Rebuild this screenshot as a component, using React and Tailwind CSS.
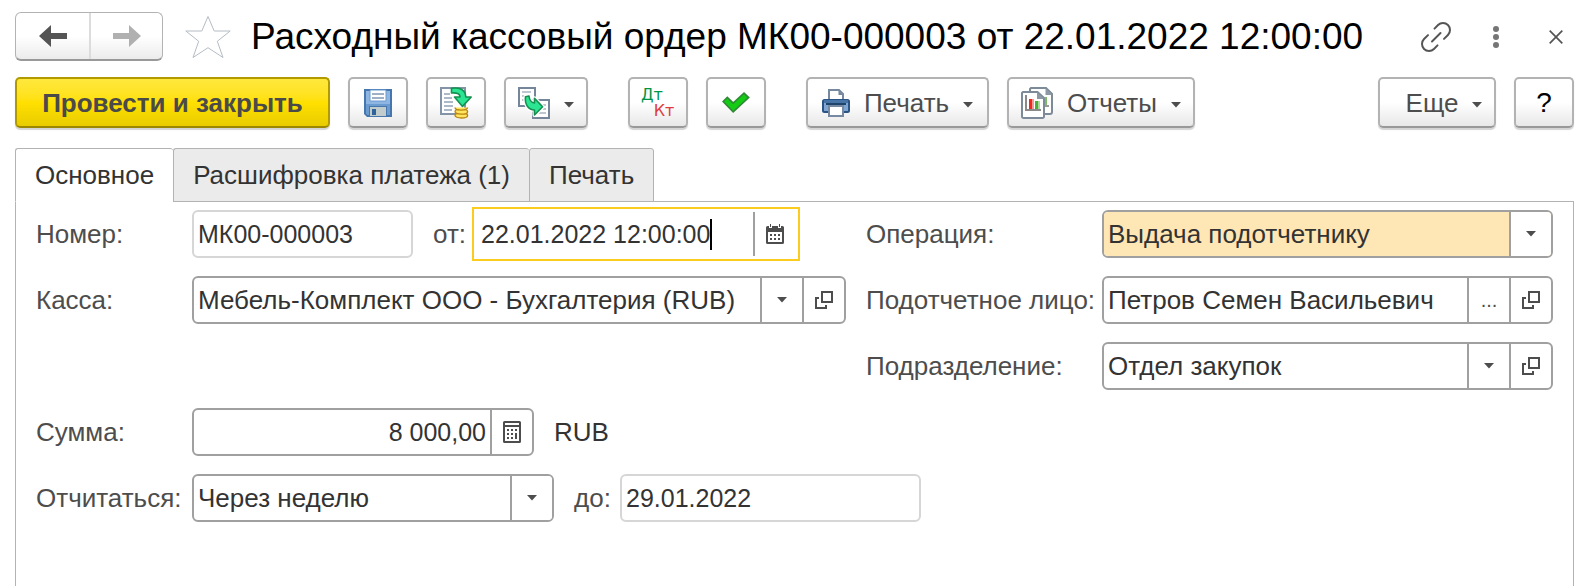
import React from "react";

function Caret({ className = "" }) {
  return (
    <svg width="10" height="6" viewBox="0 0 10 6" fill="#4d4d4d" aria-hidden="true" className={`shrink-0 ${className}`}>
      <path d="M0 0h10L5 5.500z" />
    </svg>
  );
}

function ArrowIcon({ flip, color }) {
  return (
    <svg width="28" height="22" viewBox="0 0 28 22" aria-hidden="true">
      <path d={flip ? "M28 11 16 0v8H0v6h16v8z" : "M0 11 12 0v8h16v6H12v8z"} fill={color} />
    </svg>
  );
}

function StarIcon() {
  return (
    <svg width="46" height="44" viewBox="0 0 46 44" fill="none" stroke="#b4bcc4" aria-hidden="true">
      <path d="M23 1.5 29.2 16h16L32.3 26.3 38 42.5 23 32.7 8 42.5l5.7-16.2L.8 16h16z" />
    </svg>
  );
}

function LinkIcon() {
  return (
    <svg width="30" height="30" viewBox="0 0 30 30" fill="none" stroke="#555" strokeWidth="2" strokeLinecap="round" aria-hidden="true">
      <path d="M13.5 6.6 17.05 3.05A7 7 0 0 1 26.95 12.95L23 16.9" />
      <path d="M16.5 23.4 12.95 26.95A7 7 0 0 1 3.05 17.05L7 13.1" />
      <path d="M11 19.5 19.5 11" />
    </svg>
  );
}

function MoreIcon() {
  return (
    <svg width="6" height="22" viewBox="0 0 6 22" fill="#757575" aria-hidden="true">
      <circle cx="3" cy="3" r="3" />
      <circle cx="3" cy="11" r="3" />
      <circle cx="3" cy="19" r="3" />
    </svg>
  );
}

function CloseIcon() {
  return (
    <svg width="14" height="14" viewBox="0 0 14 14" fill="none" stroke="#555" strokeWidth="1.7" aria-hidden="true">
      <path d="M.7.7l12.6 12.6M13.3.7.7 13.3" />
    </svg>
  );
}

function SaveIcon() {
  return (
    <svg width="28" height="28" viewBox="0 0 28 28" aria-hidden="true">
      <path d="M0 0h28v28H3l-3-3z" fill="#4577ae" />
      <path d="M2 2h24v24H4l-2-2z" fill="#8fb5e3" />
      <path d="M2 15h24v11H4l-2-2z" fill="#6c9bd0" />
      <path d="M6 1h16v11H6z" fill="#fff" stroke="#6a9bd0" strokeWidth="1" />
      <path d="M8 5h12M8 9h12" stroke="#9db0c6" strokeWidth="2" />
      <path d="M5 17h18v11H5z" fill="#4577ae" />
      <path d="M6 18h16v9H6z" fill="#c3cccd" />
      <path d="M8 20h4v6H8z" fill="#2f6299" />
    </svg>
  );
}

function RegisterIcon() {
  return (
    <svg width="32" height="32" viewBox="0 0 32 32" aria-hidden="true">
      <path d="M1 1h24v26H1z" fill="#fff" stroke="#8494a8" strokeWidth="2" />
      <path d="M4 7h6M4 11h8M4 15h9M4 19h9M4 23h8" stroke="#94a3b5" strokeWidth="1.6" />
      <path
        d="M11.5 1.2C19 .2 25.5 2 25.8 10h5.4l-8.7 9.4L14.500 10H20C20 6.500 16.500 5.500 11.500 6z"
        fill="#2be593"
        stroke="#15904f"
        strokeWidth="1.6"
        strokeLinejoin="round"
      />
      <g fill="#ffe45e" stroke="#b98512" strokeWidth="1.3">
        <ellipse cx="21.300" cy="28.500" rx="6.300" ry="2.500" />
        <ellipse cx="21.300" cy="24.700" rx="6.300" ry="2.500" />
        <path d="M15 20.500c0 3.500 12.600 3.500 12.600 0" />
      </g>
    </svg>
  );
}

function CreateBasedIcon() {
  const arrow =
    "M7.500 9.700 11 9c.5 4.500 2 6.500 5.500 7v-4.800L24.600 19.800 16.500 28v-5C10.500 23 6.500 17.500 7.500 9.700z";
  return (
    <svg width="32" height="32" viewBox="0 0 32 32" aria-hidden="true">
      <g fill="#fff" stroke="#76869a" strokeWidth="2">
        <path d="M1 1h16v18H1z" />
        <path d="M15 13h16v18H15z" />
      </g>
      <path d="M4 5h9M4 9h3M4 13h3M24 18h4M25 22h3M20 26h8" stroke="#a9b4c1" strokeWidth="1.6" />
      <path d={arrow} fill="#fff" stroke="#fff" strokeWidth="4" strokeLinejoin="round" />
      <path d={arrow} fill="#2be593" stroke="#15904f" strokeWidth="1.6" strokeLinejoin="round" />
    </svg>
  );
}

function CheckIcon() {
  return (
    <svg width="28" height="22" viewBox="0 0 28 22" aria-hidden="true">
      <path d="M1.200 9.500 5.300 5.400 11.200 11.200 22 1.200 26.600 5.600 11.200 19.800z" fill="#14cc14" stroke="#2f8a35" strokeWidth="1.700" />
    </svg>
  );
}

function PrinterIcon() {
  return (
    <svg width="28" height="28" viewBox="0 0 28 28" aria-hidden="true">
      <path d="M7 12V1h10l4 4v7z" fill="#fff" stroke="#7789a0" strokeWidth="2" />
      <path d="M16.500 1v5H21z" fill="#7789a0" />
      <rect x="1" y="11" width="26" height="12" rx="1.500" fill="#7fa6d2" stroke="#2a5483" strokeWidth="2" />
      <path d="M2 11h24v3H2z" fill="#4674a6" />
      <path d="M4 15h20" stroke="#1f446c" strokeWidth="2" />
      <path d="M7 17h14v10H7z" fill="#fff" stroke="#7789a0" strokeWidth="2" />
    </svg>
  );
}

function ReportsIcon() {
  return (
    <svg width="32" height="32" viewBox="0 0 32 32" aria-hidden="true">
      <path d="M10 1h15l6 6v18a2 2 0 0 1-2 2H11a2 2 0 0 1-2-2V2z" fill="#fff" stroke="#7d8b98" strokeWidth="2" />
      <path d="M24.500 1v7H31z" fill="#8d9aa6" />
      <path d="M24 10h2v9h-2z" fill="#7dbb6b" />
      <path d="M24 19h4" stroke="#999" strokeWidth="2" />
      <path d="M2 5h14.500L23 11v18.500a1.500 1.500 0 0 1-1.500 1.500h-19A1.500 1.500 0 0 1 1 29.500V6z" fill="#fff" stroke="#7d8b98" strokeWidth="2" />
      <path d="M16 5v7h7z" fill="#8d9aa6" />
      <path d="M5 8v15h15" fill="none" stroke="#8a8a8a" strokeWidth="2" />
      <path d="M8 12h3v10H8z" fill="#f0281e" />
      <path d="M11 12h2v10h-2z" fill="#f59a94" />
      <path d="M14 14h3v8h-3z" fill="#4fae35" />
      <path d="M17 14h2v8h-2z" fill="#a8dc9c" />
    </svg>
  );
}

function CalendarIcon() {
  return (
    <svg width="18" height="20" viewBox="0 0 18 20" aria-hidden="true">
      <path d="M1.500 2H3v2h3V2h6v2h3V2h1.500A1.500 1.500 0 0 1 18 3.500v15a1.500 1.500 0 0 1-1.500 1.500h-15A1.500 1.500 0 0 1 0 18.500v-15A1.500 1.500 0 0 1 1.500 2z" fill="#4d4d4d" />
      <path d="M4 0h1v3H4zM13 0h1v3h-1z" fill="#4d4d4d" />
      <path d="M2 8h14v10H2z" fill="#fff" />
      <path d="M4 10h2v2H4zM8 10h2v2H8zM12 10h2v2h-2zM4 14h2v2H4zM8 14h2v2H8zM12 14h2v2h-2z" fill="#4d4d4d" />
    </svg>
  );
}

function CalculatorIcon() {
  return (
    <svg width="18" height="22" viewBox="0 0 18 22" aria-hidden="true">
      <rect x="1" y="1" width="16" height="20" rx="0.500" fill="#fff" stroke="#4d4d4d" strokeWidth="2" />
      <path d="M2 5h14" stroke="#4d4d4d" strokeWidth="2" />
      <path d="M4 8h2v2H4zM8 8h2v2H8zM12 8h2v2h-2zM4 12h2v2H4zM8 12h2v2H8zM12 12h2v6h-2zM4 16h2v2H4zM8 16h2v2H8z" fill="#4d4d4d" />
    </svg>
  );
}

function OpenIcon() {
  return (
    <svg width="18" height="18" viewBox="0 0 18 18" fill="none" stroke="#4d4d4d" strokeWidth="2" aria-hidden="true">
      <path d="M7 1h10v10H7z" />
      <path d="M4 7H1v10h10v-3" />
    </svg>
  );
}

function ToolButton({ label, className, children }) {
  return (
    <button
      type="button"
      aria-label={label}
      className={`flex h-[51px] shrink-0 items-center justify-center rounded-[5px] border-2 border-[#b3b3b3] border-b-[#999] bg-linear-to-b from-white from-50% to-[#e8e8e8] text-[#4d4d4d] shadow-[0_2px_1px_#d4d4d4] ${className}`}
    >
      {children}
    </button>
  );
}

function Label({ htmlFor, className = "", children }) {
  return (
    <label htmlFor={htmlFor} className={`shrink-0 whitespace-nowrap text-[#4d4d4d] ${className}`}>
      {children}
    </label>
  );
}

function Field({ className = "", readOnly, children }) {
  return (
    <div
      className={`flex h-12 min-w-0 overflow-hidden rounded-[6px] border-2 bg-white ${
        readOnly ? "border-[#d6d6d6]" : "border-[#a0a0a0]"
      } ${className}`}
    >
      {children}
    </div>
  );
}

function TextInput({ id, value, className = "", readOnly }) {
  return (
    <input
      id={id}
      type="text"
      defaultValue={value}
      readOnly={readOnly}
      className={`h-full w-full min-w-0 flex-1 bg-transparent px-1 outline-none ${className}`}
    />
  );
}

function SelectInput({ id, options, className = "" }) {
  return (
    <div className="grid min-w-0 flex-1 grid-cols-1 grid-rows-1">
      <select
        id={id}
        className={`col-start-1 row-start-1 h-full w-full appearance-none truncate pr-11 pl-1 outline-none ${className}`}
      >
        {options.map((option) => (
          <option key={option}>{option}</option>
        ))}
      </select>
      <span className="pointer-events-none col-start-1 row-start-1 flex w-[42px] items-center justify-center justify-self-end border-l-2 border-[#a0a0a0] bg-white">
        <Caret />
      </span>
    </div>
  );
}

function FieldButton({ label, children }) {
  return (
    <button
      type="button"
      aria-label={label}
      className="flex w-[42px] shrink-0 items-center justify-center border-l-2 border-[#a0a0a0] text-[#4d4d4d]"
    >
      {children}
    </button>
  );
}

function Header() {
  return (
    <header className="flex items-center">
      <div className="flex h-[49px] shrink-0 overflow-hidden rounded-[6px] border border-b-2 border-[#b3b3b3] border-b-[#999] bg-linear-to-b from-white from-50% to-[#ececec]">
        <button type="button" aria-label="Назад" className="flex w-[73px] items-center justify-center">
          <ArrowIcon color="#555" />
        </button>
        <button type="button" aria-label="Вперед" className="flex w-[73px] items-center justify-center border-l-2 border-[#dcdcdc]">
          <ArrowIcon flip color="#b0b0b0" />
        </button>
      </div>
      <button type="button" aria-label="В избранное" className="ml-[22px] shrink-0">
        <StarIcon />
      </button>
      <h1 className="ml-5 min-w-0 flex-1 truncate text-[37px] leading-[49px] text-black">
        Расходный кассовый ордер МК00-000003 от 22.01.2022 12:00:00
      </h1>
      <div className="flex shrink-0 items-center gap-6 pl-6">
        <button type="button" aria-label="Получить ссылку" className="flex size-9 items-center justify-center">
          <LinkIcon />
        </button>
        <button type="button" aria-label="Меню" className="flex size-9 items-center justify-center">
          <MoreIcon />
        </button>
        <button type="button" aria-label="Закрыть" className="flex size-9 items-center justify-center">
          <CloseIcon />
        </button>
      </div>
    </header>
  );
}

function Toolbar() {
  return (
    <div className="mt-4 flex gap-[18px]">
      <button
        type="button"
        className="h-[51px] w-[315px] shrink-0 rounded-[5px] border-2 border-[#b09a00] border-b-[#9c8800] bg-linear-to-b from-[#ffe83c] via-[#ffe000] to-[#e8cc00] font-bold text-[#4a4a4a] shadow-[0_2px_1px_#d4d4d4]"
      >
        Провести и закрыть
      </button>
      <ToolButton label="Записать" className="w-[60px]">
        <SaveIcon />
      </ToolButton>
      <ToolButton label="Провести" className="w-[60px]">
        <RegisterIcon />
      </ToolButton>
      <ToolButton label="Создать на основании" className="w-[84px] gap-[14px]">
        <CreateBasedIcon />
        <Caret className="mt-1" />
      </ToolButton>
      <ToolButton label="Дт Кт" className="ml-[22px] w-[60px]">
        <span className="flex flex-col font-['DejaVu_Sans',sans-serif] text-[16px] leading-4">
          <span className="pr-3 text-[#009646]">Дт</span>
          <span className="pl-3 text-[#e03c3c]">Кт</span>
        </span>
      </ToolButton>
      <ToolButton label="Проверено" className="w-[60px]">
        <CheckIcon />
      </ToolButton>
      <ToolButton label="Печать" className="ml-[22px] w-[183px] gap-[14px]">
        <PrinterIcon />
        <span>Печать</span>
        <Caret className="mt-1" />
      </ToolButton>
      <ToolButton label="Отчеты" className="w-[188px] gap-[14px]">
        <ReportsIcon />
        <span>Отчеты</span>
        <Caret className="mt-1" />
      </ToolButton>
      <ToolButton label="Еще" className="ml-auto w-[118px] gap-[14px] pl-[14px]">
        <span>Еще</span>
        <Caret className="mt-1" />
      </ToolButton>
      <ToolButton label="Справка" className="w-[60px]">
        <span className="text-[28px] text-black">?</span>
      </ToolButton>
    </div>
  );
}

function Tab({ active, last, children }) {
  return (
    <button
      type="button"
      role="tab"
      aria-selected={Boolean(active)}
      className={`h-[54px] rounded-t-[3px] border-t border-b border-l border-[#b3b3b3] px-[19px] whitespace-nowrap ${
        active ? "border-b-white bg-white" : "bg-[#ebebeb]"
      } ${last ? "border-r" : ""}`}
    >
      {children}
    </button>
  );
}

function PaymentForm() {
  return (
    <form
      className="grid grid-cols-[810fr_687fr] items-start gap-x-5 gap-y-[18px]"
      onSubmit={(event) => event.preventDefault()}
    >
      <div className="flex min-w-0 flex-col gap-[18px]">
        <div className="flex h-12 items-center">
          <Label htmlFor="number" className="w-[156px]">Номер:</Label>
          <Field readOnly className="w-[221px]">
            <TextInput id="number" value="МК00-000003" readOnly className="text-[25px]" />
          </Field>
          <Label htmlFor="date" className="w-[59px] pl-5">от:</Label>
          <div className="flex h-[54px] w-[328px] items-center border-2 border-[#fbcb1e] bg-white">
            <div className="flex min-w-0 flex-1 items-center pl-[7px]">
              <input
                id="date"
                type="text"
                defaultValue="22.01.2022 12:00:00"
                className="field-sizing-content min-w-0 bg-transparent text-[25px] caret-transparent outline-none"
              />
              <span className="h-[31px] w-[2px] shrink-0 bg-black" />
            </div>
            <button
              type="button"
              aria-label="Выбрать дату"
              className="flex h-11 w-[45px] shrink-0 items-center justify-center border-l-2 border-[#a0a0a0] pr-[3px]"
            >
              <CalendarIcon />
            </button>
          </div>
        </div>

        <div className="flex h-12 items-center">
          <Label htmlFor="cashbox" className="w-[156px]">Касса:</Label>
          <Field className="flex-1">
            <SelectInput id="cashbox" options={["Мебель-Комплект ООО - Бухгалтерия (RUB)"]} />
            <FieldButton label="Открыть кассу">
              <OpenIcon />
            </FieldButton>
          </Field>
        </div>
      </div>

      <div className="flex min-w-0 flex-col gap-[18px]">
        <div className="flex h-12 items-center">
          <Label htmlFor="operation" className="w-[236px]">Операция:</Label>
          <Field className="flex-1">
            <SelectInput id="operation" options={["Выдача подотчетнику"]} className="bg-[#ffe7b5]" />
          </Field>
        </div>
        <div className="flex h-12 items-center">
          <Label htmlFor="person" className="w-[236px]">Подотчетное лицо:</Label>
          <Field className="flex-1">
            <TextInput id="person" value="Петров Семен Васильевич" />
            <FieldButton label="Выбрать лицо">
              <span className="text-[20px]">...</span>
            </FieldButton>
            <FieldButton label="Открыть лицо">
              <OpenIcon />
            </FieldButton>
          </Field>
        </div>
        <div className="flex h-12 items-center">
          <Label htmlFor="department" className="w-[236px]">Подразделение:</Label>
          <Field className="flex-1">
            <SelectInput id="department" options={["Отдел закупок"]} />
            <FieldButton label="Открыть подразделение">
              <OpenIcon />
            </FieldButton>
          </Field>
        </div>
      </div>

      <div className="col-span-2 flex flex-col gap-[18px]">
        <div className="flex h-12 items-center">
          <Label htmlFor="amount" className="w-[156px]">Сумма:</Label>
          <Field className="w-[342px]">
            <TextInput id="amount" value="8 000,00" className="text-right text-[25px]" />
            <FieldButton label="Калькулятор">
              <CalculatorIcon />
            </FieldButton>
          </Field>
          <span className="pl-5">RUB</span>
        </div>
        <div className="flex h-12 items-center">
          <Label htmlFor="report" className="w-[156px]">Отчитаться:</Label>
          <Field className="w-[362px]">
            <SelectInput id="report" options={["Через неделю"]} />
          </Field>
          <Label htmlFor="deadline" className="w-[66px] pl-5">до:</Label>
          <Field readOnly className="w-[301px]">
            <TextInput id="deadline" value="29.01.2022" readOnly className="text-[25px]" />
          </Field>
        </div>
      </div>
    </form>
  );
}

export default function App() {
  return (
    <main className="flex min-h-screen flex-col bg-white pt-3 pr-[19px] pl-[15px] font-['Liberation_Sans',Arial,sans-serif] text-[26px] leading-[30px] text-[#333]">
      <Header />
      <Toolbar />
      <div role="tablist" className="relative mt-5 -mb-px flex">
        <Tab active>Основное</Tab>
        <Tab>Расшифровка платежа (1)</Tab>
        <Tab last>Печать</Tab>
      </div>
      <section className="flex-1 border border-b-0 border-[#b3b3b3] px-5 pt-2">
        <PaymentForm />
      </section>
    </main>
  );
}
